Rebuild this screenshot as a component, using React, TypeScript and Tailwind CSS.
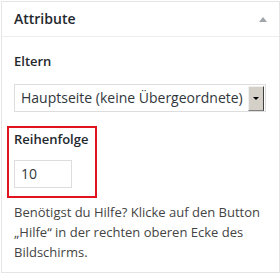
export default function App() {
  return (
    <div className="bg-white w-[280px] h-[274px] pt-px pl-px font-['Open_Sans',sans-serif] text-[#444]">
      <div className="w-[279px] h-[272px] border border-[#e5e5e5] flex flex-col">
        <div className="h-[35px] border-b border-[#eee] flex items-center justify-between pl-3 pr-3">
          <h2 className="text-[14px] leading-5 font-semibold text-[#23282d]">Attribute</h2>
          <span className="w-0 h-0 border-l-[4px] border-r-[4px] border-b-[5px] border-l-transparent border-r-transparent border-b-[#a0a5aa]" />
        </div>
        <div className="pl-3 pr-3 pt-[14px]">
          <p className="text-[13px] leading-5 font-semibold text-[#23282d]">Eltern</p>
          <div className="mt-[13px] w-[252px] h-[28px] border border-[#ddd] flex items-center justify-between pl-[6px] pr-px">
            <span className="text-[14px] leading-5 text-[#32373c] whitespace-nowrap">Hauptseite (keine Übergeordnete)</span>
            <span className="w-[16px] h-[25px] bg-[#d4d0c8] border-t border-l border-t-[#f0f0f0] border-l-[#f0f0f0] border-r border-b border-r-[#404040] border-b-[#808080] flex items-center justify-center">
              <span className="w-0 h-0 border-l-[3px] border-r-[3px] border-t-[3px] border-l-transparent border-r-transparent border-t-black" />
            </span>
          </div>
          <div className="mt-[14px] -ml-[7px] w-[90px] h-[72px] border-2 border-[#e0141e] pl-[5px] pt-px">
            <p className="text-[13px] leading-5 font-semibold text-[#23282d]">Reihenfolge</p>
            <div className="mt-[11px] w-[58px] h-[28px] border border-[#ddd] flex items-center pl-[6px]">
              <span className="text-[14px] leading-5 text-[#32373c]">10</span>
            </div>
          </div>
          <p className="mt-[4px] text-[13px] leading-5 text-[#444]">
            Benötigst du Hilfe? Klicke auf den Button „Hilfe“ in der rechten oberen Ecke des Bildschirms.
          </p>
        </div>
      </div>
    </div>
  );
}
